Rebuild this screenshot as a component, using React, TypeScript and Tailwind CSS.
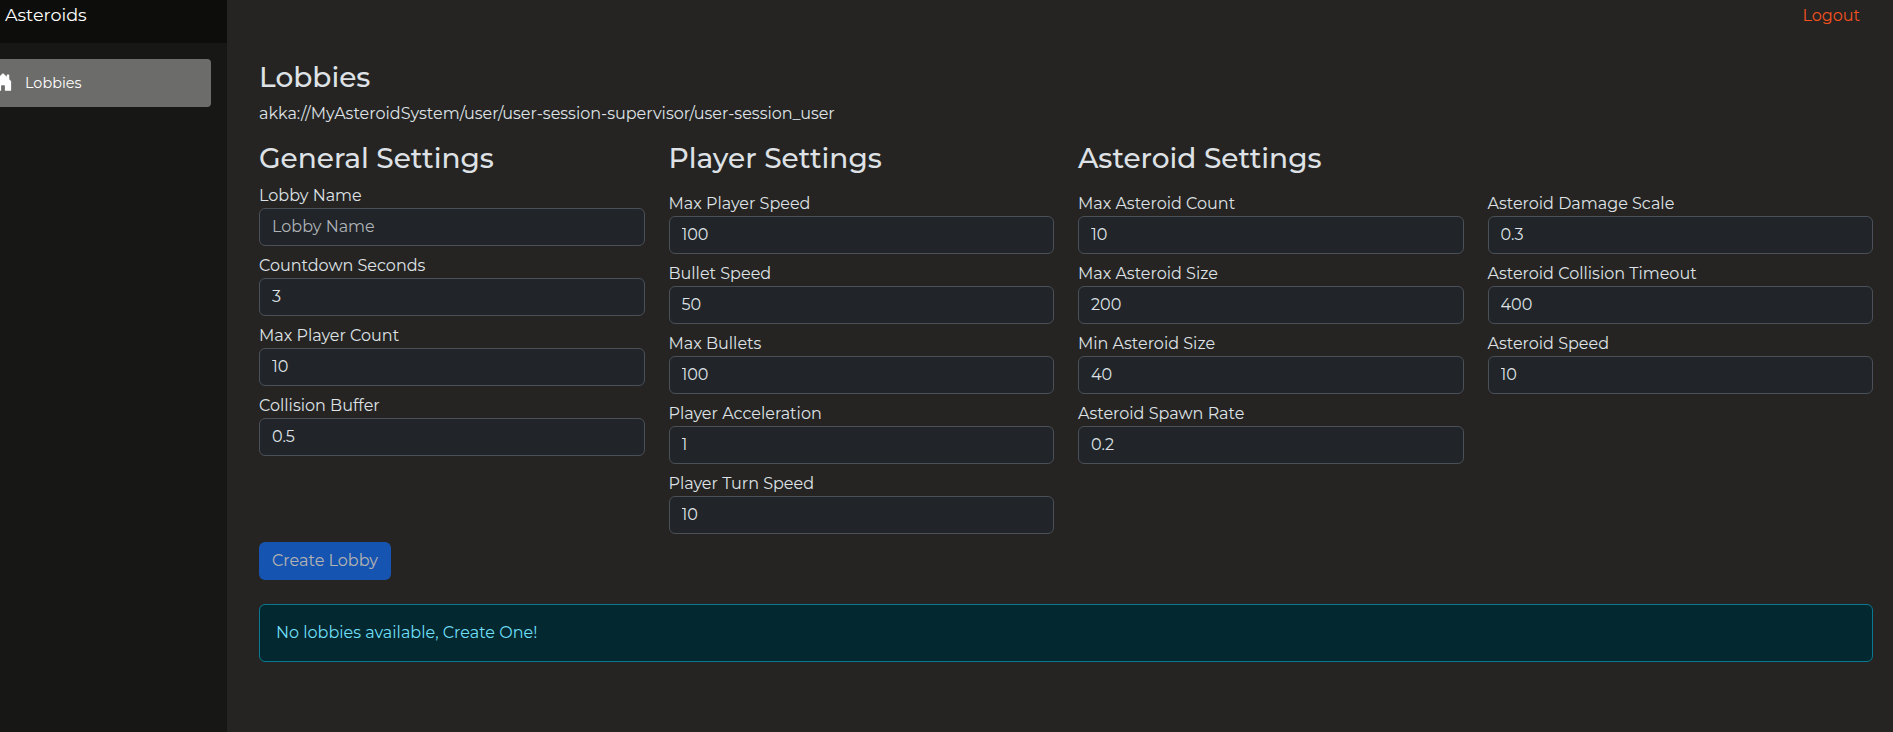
import { useState } from 'react';

type Field = { label: string; value: string; placeholder?: string };
type Group = { title: string; spaced: boolean; fields: Field[] };

const groups: Group[] = [
  {
    title: 'General Settings',
    spaced: false,
    fields: [
      { label: 'Lobby Name', value: '', placeholder: 'Lobby Name' },
      { label: 'Countdown Seconds', value: '3' },
      { label: 'Max Player Count', value: '10' },
      { label: 'Collision Buffer', value: '0.5' },
    ],
  },
  {
    title: 'Player Settings',
    spaced: true,
    fields: [
      { label: 'Max Player Speed', value: '100' },
      { label: 'Bullet Speed', value: '50' },
      { label: 'Max Bullets', value: '100' },
      { label: 'Player Acceleration', value: '1' },
      { label: 'Player Turn Speed', value: '10' },
    ],
  },
  {
    title: 'Asteroid Settings',
    spaced: true,
    fields: [
      { label: 'Max Asteroid Count', value: '10' },
      { label: 'Max Asteroid Size', value: '200' },
      { label: 'Min Asteroid Size', value: '40' },
      { label: 'Asteroid Spawn Rate', value: '0.2' },
    ],
  },
  {
    title: '',
    spaced: true,
    fields: [
      { label: 'Asteroid Damage Scale', value: '0.3' },
      { label: 'Asteroid Collision Timeout', value: '400' },
      { label: 'Asteroid Speed', value: '10' },
    ],
  },
];

function FieldRow({ field }: { field: Field }) {
  const [value, setValue] = useState(field.value);
  return (
    <label className="mb-2 flex flex-col">
      <span className="h-6 leading-6">{field.label}</span>
      <input
        className="h-[38px] w-full rounded-md border border-[#495057] bg-[#212529] px-3 pb-[2px] text-[#dee2e6] outline-none placeholder:text-[#afb3b7]"
        value={value}
        placeholder={field.placeholder}
        onChange={(e) => setValue(e.target.value)}
      />
    </label>
  );
}

export default function App() {
  return (
    <div className="flex h-[732px] overflow-hidden bg-[#262422] font-['Montserrat','Inter',sans-serif] text-base text-[#dee2e6]">
      <aside className="w-[227px] shrink-0 bg-[#171715]">
        <div className="h-[43px] bg-[#0d0d0b] pl-[5px] pt-px text-[17.6px] leading-7 text-white">Asteroids</div>
        <nav className="pt-4">
          <a className="flex h-12 w-[211px] items-center rounded-r bg-[#6c6c6a] text-[14.4px] text-white">
            <svg className="-ml-[7px] mb-[2px] mr-3 h-5 w-5 shrink-0" viewBox="0 0 16 16" fill="white">
              <path d="M6.5 14.5v-3.505c0-.245.25-.495.5-.495h2c.25 0 .5.25.5.5v3.5a.5.5 0 0 0 .5.5h4a.5.5 0 0 0 .5-.5v-7a.5.5 0 0 0-.146-.354L13 5.793V2.500a.5.5 0 0 0-.5-.5h-1a.5.5 0 0 0-.5.5v1.293L8.354 1.146a.5.5 0 0 0-.708 0l-6 6A.5.5 0 0 0 1.500 7.500v7a.5.5 0 0 0 .5.5h4a.5.5 0 0 0 .5-.5Z" />
            </svg>
            <span className="pt-px">Lobbies</span>
          </a>
        </nav>
      </aside>
      <main className="flex min-w-0 flex-1 flex-col pl-8 pr-5">
        <div className="flex h-[60px] justify-end pr-[13px] pt-1 leading-6 text-[#f4511e]">
          <a>Logout</a>
        </div>
        <h3 className="mb-2 h-[34px] text-[28px] font-medium leading-[34px]">Lobbies</h3>
        <p className="mb-[15px] h-6 leading-6">akka://MyAsteroidSystem/user/user-session-supervisor/user-session_user</p>
        <div className="grid grid-cols-4 gap-x-6">
          {groups.map((g, i) => (
            <section key={i}>
              <h3 className={g.spaced ? 'mb-[17px] h-[34px] text-[28px] font-medium leading-[34px]' : 'mb-[9px] h-[34px] text-[28px] font-medium leading-[34px]'}>
                {g.title}
              </h3>
              {g.fields.map((f) => (
                <FieldRow key={f.label} field={f} />
              ))}
            </section>
          ))}
        </div>
        <button className="h-[38px] w-[132px] rounded-md bg-[#0d6efd] pb-px text-white opacity-65">Create Lobby</button>
        <div className="mt-6 flex h-[58px] items-center rounded-md border border-[#087990] bg-[#032830] px-4 text-[#6edff6]">
          No lobbies available, Create One!
        </div>
      </main>
    </div>
  );
}
